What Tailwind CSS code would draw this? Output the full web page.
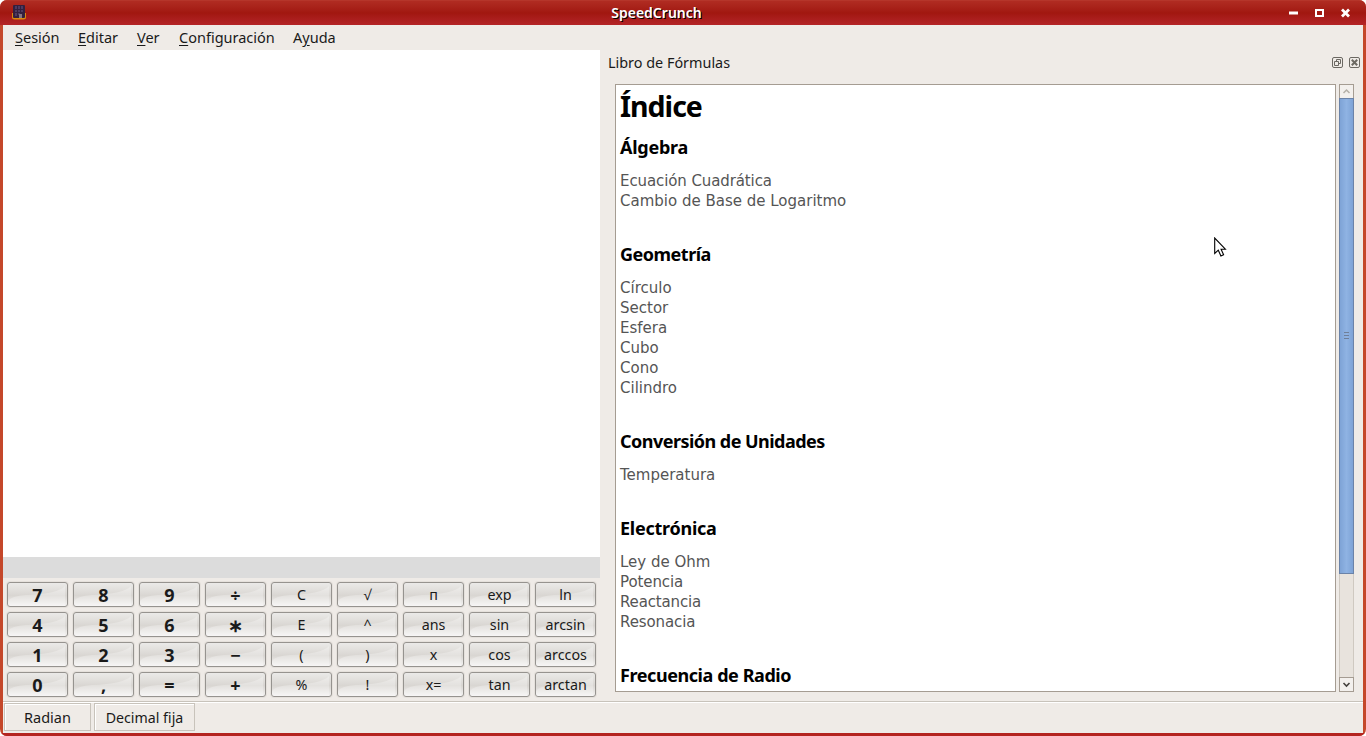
<!DOCTYPE html>
<html lang="es">
<head>
<meta charset="utf-8">
<title>SpeedCrunch</title>
<script src="https://cdn.jsdelivr.net/npm/@tailwindcss/browser@4"></script>
</head>
<body class="bg-white w-[1366px] h-[736px] overflow-hidden font-['Noto_Sans','Open_Sans',sans-serif] text-[14.5px] text-[#1a1a1a]">
<div class="w-[1366px] h-[736px] rounded-[7px] overflow-hidden bg-[#c4472a] flex flex-col">
  <header class="h-[25px] shrink-0 flex items-center bg-linear-to-b from-[#b02c22] via-[#a11710] to-[#b42427] border-t border-[#b5352a] pl-3 pr-[15px]">
    <svg class="w-[14px] h-[15px] shrink-0 -mt-px" viewBox="0 0 14 15"><path d="M0 8V12Q0 14.500 2.500 14.500H11.500Q14 14.500 14 12V8Z" fill="#d98a0c"/><rect x="1" y="0" width="12" height="13" rx="1" fill="#33203f"/><path d="M3 1h2v3H3zM6 1h2v3H6zM9 1h2v3H9zM3 5h2v2H3zM6 5h2v2H6zM9 5h2v2H9zM3 8h2v3H3zM6 8h2v2H6z" fill="#4d3a60"/><path d="M7 9h3v4H7z" fill="#857480"/></svg>
    <h1 class="flex-1 text-center text-white font-semibold text-[14px] leading-[24px] [text-shadow:1px_1px_0_#000] -ml-[2px]">SpeedCrunch</h1>
    <svg class="w-[62px] h-[12px] shrink-0" viewBox="0 0 62 12"><path d="M0 4.500h9v3H0z" fill="#fff"/><path d="M27 3h7v6h-7z" fill="none" stroke="#fff" stroke-width="2"/><path d="M53 2.500l7 7M60 2.500l-7 7" stroke="#fff" stroke-width="2.800"/></svg>
  </header>
  <div class="flex-1 mx-[3px] bg-[#efebe7] flex flex-col min-h-0">
    <nav class="h-[25px] shrink-0 flex gap-[18px] pl-3 leading-[25px]">
      <span class="w-[45px]"><u class="underline-offset-[2px]">S</u>esión</span><span class="w-[41px]"><u class="underline-offset-[2px]">E</u>ditar</span><span class="w-[24px]"><u class="underline-offset-[2px]">V</u>er</span><span class="w-[96px]"><u class="underline-offset-[2px]">C</u>onfiguración</span><span>A<u class="underline-offset-[2px]">y</u>uda</span>
    </nav>
    <main class="h-[651px] shrink-0 flex">
      <section class="w-[597px] flex flex-col">
        <div class="h-[507px] bg-white"></div>
        <div class="h-[21px] bg-[#dcdcdc]"></div>
        <div id="keys" class="grid grid-cols-[repeat(9,61px)] auto-rows-[25px] gap-x-[5px] gap-y-[5px] pl-1 pt-1"></div>
      </section>
      <aside class="flex-1 flex flex-col">
        <div class="h-[34px] flex items-center pl-2 pr-[3px]">
          <h2 class="flex-1 leading-[24px] -mt-[9px] text-[14.4px]">Libro de Fórmulas</h2>
          <svg class="w-[28px] h-[11px] -mt-[9px]" viewBox="0 0 28 11" fill="none" stroke="#6b6862"><rect x=".5" y=".5" width="10" height="10" rx="1.500"/><path d="M4.500 4.500v-2h4v4h-2M2.500 4.500h4v4h-4z"/><rect x="17.500" y=".5" width="10" height="10" rx="1.500"/><path d="M19.800 2.800l5.400 5.400M25.200 2.800l-5.400 5.400" stroke-width="2"/></svg>
        </div>
        <div class="flex pl-[15px]">
          <article class="w-[721px] h-[608px] bg-white border border-[#a59c92] overflow-hidden pl-1 text-black">
            <h1 class="font-bold text-[28.500px] leading-[42px] h-[50px] tracking-[-1px]">Índice</h1>
            <h3 class="font-bold text-[18px] leading-[24px] mb-3 tracking-[-.25px]">Álgebra</h3>
            <ul class="font-['DejaVu_Sans',sans-serif] text-[15px] leading-[20px] text-[#555] mb-[31px]"><li class="tracking-[-.1px]">Ecuación Cuadrática</li><li>Cambio de Base de Logaritmo</li></ul>
            <h3 class="font-bold text-[18px] leading-[24px] mb-3 tracking-[-.5px]">Geometría</h3>
            <ul class="font-['DejaVu_Sans',sans-serif] text-[15px] leading-[20px] text-[#555] mb-[31px]"><li>Círculo</li><li>Sector</li><li>Esfera</li><li>Cubo</li><li>Cono</li><li>Cilindro</li></ul>
            <h3 class="font-bold text-[18px] leading-[24px] mb-3 tracking-[-.53px]">Conversión de Unidades</h3>
            <ul class="font-['DejaVu_Sans',sans-serif] text-[15px] leading-[20px] text-[#555] mb-[31px]"><li>Temperatura</li></ul>
            <h3 class="font-bold text-[18px] leading-[24px] mb-3 tracking-[-.25px]">Electrónica</h3>
            <ul class="font-['DejaVu_Sans',sans-serif] text-[15px] leading-[20px] text-[#555] mb-[31px]"><li>Ley de Ohm</li><li class="tracking-[-.1px]">Potencia</li><li class="tracking-[-.15px]">Reactancia</li><li class="tracking-[-.1px]">Resonacia</li></ul>
            <h3 class="font-bold text-[18px] leading-[24px] tracking-[-.43px]">Frecuencia de Radio</h3>
          </article>
          <div class="ml-[3px] w-[15px] h-[608px] flex flex-col bg-[#e8e3dd] border-x border-[#cfc9c1]">
            <div class="-mx-px h-[14px] border border-b-0 border-[#a59c92] bg-[#f3f0ed] flex items-center justify-center"><svg class="w-[9px] h-[7px]" viewBox="0 0 9 7"><path d="M1.500 5l3-3 3 3" fill="none" stroke="#b5b0a8" stroke-width="1.500"/></svg></div>
            <div class="-mx-px h-[476px] border border-[#6b83a8] bg-linear-to-r from-[#7ea3d6] via-[#8fb3e3] to-[#7ea3d6] flex flex-col items-center justify-center gap-[2px] pb-[2px]"><i class="w-[5px] h-px bg-[#6f7f98]"></i><i class="w-[5px] h-px bg-[#6f7f98]"></i><i class="w-[5px] h-px bg-[#6f7f98]"></i></div>
            <div class="flex-1"></div>
            <div class="-mx-px h-[15px] border border-[#a59c92] bg-[#f3f0ed] flex items-center justify-center"><svg class="w-[9px] h-[7px]" viewBox="0 0 9 7"><path d="M1.500 2l3 3 3-3" fill="none" stroke="#45423e" stroke-width="1.600"/></svg></div>
          </div>
        </div>
      </aside>
    </main>
    <footer class="flex-1 border-t border-[#c8c3bb] flex gap-[3px] pl-px shadow-[inset_0_1px_0_#fff] pt-px">
      <div class="w-[87px] h-[28px] border border-[#c8c3bb] shadow-[inset_1px_1px_0_#fff] text-center leading-[26px]">Radian</div>
      <div class="w-[101px] h-[28px] border border-[#c8c3bb] shadow-[inset_1px_1px_0_#fff] text-center leading-[28px] text-[14.2px]">Decimal fija</div>
    </footer>
  </div>
  <div class="h-[3px] shrink-0 bg-[#b42420]"></div>
</div>
<svg class="absolute left-[1214px] top-[237px] w-[14px] h-[21px]" viewBox="0 0 14 21"><path d="M.7 1v15.500l3.600-3.300 2.600 5.800 2.700-1.200-2.500-5.600h4.300z" fill="#fff" stroke="#000" stroke-width="1.100"/></svg>
<script>
const rows=[['7','8','9','÷','C','√','п','exp','ln'],['4','5','6','∗','E','^','ans','sin','arcsin'],['1','2','3','−','(',')','x','cos','arccos'],['0',',','=','+','%','!','x=','tan','arctan']];
document.getElementById('keys').innerHTML=rows.flatMap(r=>r.map((k,i)=>`<button class="relative border border-[#96938f] rounded-[3px] bg-linear-to-b from-[#ebeae8] via-[#d9d6d2] via-55% to-[#f4f3f2] shadow-[0_0_0_1px_#e5e1dc] flex items-center justify-center overflow-hidden ${i<4?'font-bold text-[18px]':'text-[14.3px]'}"><svg class="absolute inset-0 w-full h-full" viewBox="0 0 59 23" preserveAspectRatio="none"><path d="M0 23V18Q3 13 18 12Q50 11 57 3V23Z" fill="#fff" fill-opacity=".28"/></svg><span class="relative leading-[23px] ${i<4?'top-px':''}">${k}</span></button>`)).join('');
</script>
</body>
</html>
